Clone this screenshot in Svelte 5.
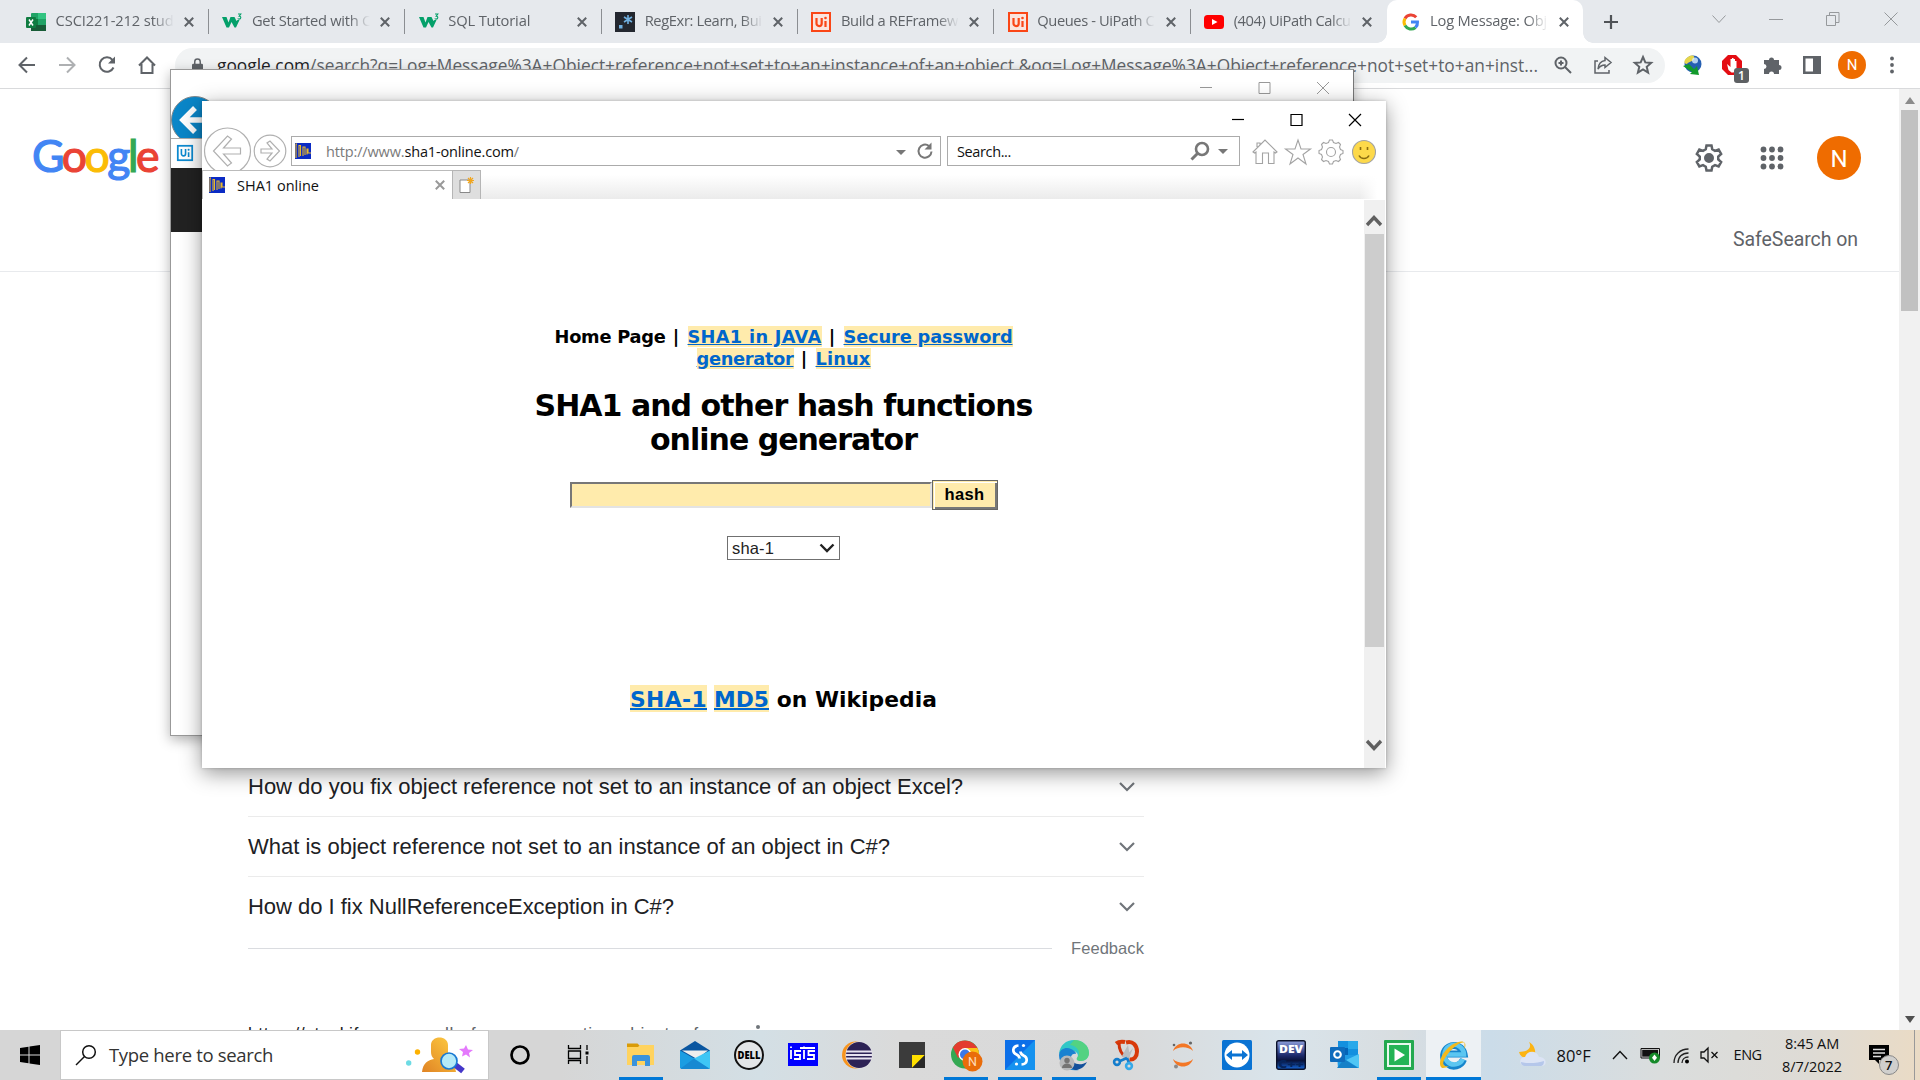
<script>
  // Spreads letter spacing so a label takes exactly the given width.
  function fit(node, width) {
    const n = node.textContent.length;
    const natural = node.getBoundingClientRect().width;
    node.style.letterSpacing = (width - natural) / n + 'px';
  }

  const w3 = '<path d="M0 5h4.500l2 5.500 2-5.500h4l2 4 1-1h2L14 15.500h-1.500L9.500 10 7 15.500H4.500z" fill="#04a06a"/><path d="M16 2h2.800l-1.600 2.100c2.300 0 2 3-.2 3-.6 0-1-.2-1.300-.6" fill="none" stroke="#04a06a" stroke-width="1.100"/>';
  const uip = '<rect x="1" y="1" width="18" height="18" fill="#fbe4dd" stroke="#fa4616" stroke-width="2"/><path d="M5.500 6v5.500a2.600 2.600 0 0 0 5.200 0V6M14.500 9v6" fill="none" stroke="#fa4616" stroke-width="2.200"/><circle cx="14.500" cy="6" r="1.300" fill="#fa4616"/>';
  const tabs = [
    { label: 'CSCI221-212 stud', w: 118, icon: '<rect x="5" y="1" width="15" height="18" rx="1" fill="#21a366"/><path d="M12 1h8v6h-8z" fill="#33c481"/><path d="M5 7h7v6H5z" fill="#107c41"/><path d="M5 13h15v6H5z" fill="#185c37"/><rect y="5" width="10" height="11" rx="1" fill="#107c41"/><path d="M3 7.500l4 6M7 7.500l-4 6" stroke="#fff" stroke-width="1.500"/>' },
    { label: 'Get Started with C', w: 119, icon: w3 },
    { label: 'SQL Tutorial', w: 82, icon: w3 },
    { label: 'RegExr: Learn, Bui', w: 117, icon: '<rect width="20" height="20" fill="#23272f"/><rect x="4" y="13" width="3.500" height="3.500" fill="#70b0e0"/><path d="M13 3v9M9 5l8 5M17 5l-8 5" stroke="#70b0e0" stroke-width="1.600"/>' },
    { label: 'Build a REFramew', w: 117, icon: uip },
    { label: 'Queues - UiPath C', w: 117, icon: uip },
    { label: '(404) UiPath Calcu', w: 117, icon: '<rect y="3" width="20" height="14" rx="3.500" fill="#f00"/><path d="M8 7l5.500 3L8 13z" fill="#fff"/>' },
    { label: 'Log Message: Obj', w: 117, active: true, icon: '<g fill="none" stroke-width="3"><path d="M15.200 5.200A7 7 0 0 0 4 6.500" stroke="#ea4335"/><path d="M4 6.500a7 7 0 0 0 0 7" stroke="#fbbc05"/><path d="M4 13.500a7 7 0 0 0 10.500 2" stroke="#34a853"/><path d="M14.500 15.500a7 7 0 0 0 2-5.500H10" stroke="#4285f4"/></g>' }
  ];

  const questions = [
    ['How do you fix object reference not set to an instance of an object Excel?', 715],
    ['What is object reference not set to an instance of an object in C#?', 642],
    ['How do I fix NullReferenceException in C#?', 426]
  ];

  // Taskbar icons are drawn on a 30 by 30 grid.
  const tasks = [
    { icon: '<circle cx="15" cy="15" r="8.500" fill="none" stroke="#000" stroke-width="2.700"/>' },
    { icon: '<path d="M4.500 5v3.500h12V5M4.500 24v-3.500h12V24M4.500 11h12v7.500h-12zM23 5v5M23 16v8" fill="none" stroke="#000" stroke-width="1.300"/><rect x="21.500" y="11.500" width="3" height="3"/>' },
    { run: true, icon: '<path d="M1 5V3.500h10.500L14 6v3H1z" fill="#d99b08"/><path d="M1 7h11l2-2h14v20H1z" fill="#ffd35f"/><path d="M6 26V17a2 2 0 0 1 2-2h14a2 2 0 0 1 2 2v9h-5v-5h-8v5z" fill="#3a93dd"/>' },
    { icon: '<path d="M0 10.500L15 1l15 9.500V28H0z" fill="#0a56a0"/><path d="M2 10.500h26L17 19z" fill="#eee"/><path d="M0 10.500L15 19l15 9H0z" fill="#1b9de2"/><path d="M30 10.500V29L13 19z" fill="#3fc6f5"/><path d="M0 29h30L14 18.500z" fill="#1789d2"/>' },
    { icon: '<circle cx="15" cy="15" r="14" fill="#e2e5e7" stroke="#111" stroke-width="2"/><text x="3.500" y="18.700" font-family="Open Sans, sans-serif" font-weight="800" font-size="10.500" textLength="23" lengthAdjust="spacingAndGlyphs">DELL</text>' },
    { icon: '<rect y="3" width="30" height="23" fill="#00f"/><path d="M3 10v9M3 6.500v1.500M13 11H7v4h5v4H6M16 10v9M16 6.500v1.500M27 11h-6.500v4H26v4h-7M12 8h15" fill="none" stroke="#fff" stroke-width="1.800"/>' },
    { icon: '<circle cx="13.500" cy="15" r="13.500" fill="#f7941e"/><circle cx="17" cy="15" r="13.500" fill="#e4e2e8"/><circle cx="17" cy="15" r="13" fill="#2c2255"/><path d="M4 11.500h26M4 15h26M4 18.500h26" stroke="#e7e3ef" stroke-width="2"/>' },
    { icon: '<path d="M2 2h26v26H2z" fill="#3b3b3b"/><path d="M15 15h13L15 28z" fill="#ffe000"/><path d="M28 15v13H15z" fill="#292929"/>' },
    { run: true, icon: '<circle cx="14" cy="14.500" r="14" fill="#34a853"/><path d="M14 .5a14 14 0 0 1 13.500 10.500H14L7 18 1.900 7.500A14 14 0 0 1 14 .5z" fill="#e33b2e"/><path d="M14 8h12.500a14 14 0 0 1-11 20.500L20 17z" fill="#fbc116"/><circle cx="14" cy="14.500" r="6.500" fill="#fff"/><circle cx="14" cy="14.500" r="5" fill="#3b78e7"/><circle cx="21.500" cy="21.500" r="10" fill="#e96c0a"/><text x="21.500" y="26" fill="#ffdcb9" text-anchor="middle" font-family="Roboto, sans-serif" font-size="12.500">N</text>' },
    { run: true, icon: '<rect width="30" height="30" fill="#0c6fe8"/><path d="M0 30L30 0v30z" fill="#1592ef"/><path d="M13.500 5.500C7 6 7 12.500 11.500 14.500c2 1 3 2 3 4M16.500 24.500C23 24 23 17.500 18.500 15.500c-2-1-3-2-3-4" fill="none" stroke="#fff" stroke-width="2.700"/><circle cx="18.500" cy="5.500" r="1.600" fill="#fff"/><circle cx="11.500" cy="24" r="1.600" fill="#fff"/>' },
    { run: true, icon: '<path d="M0 14C1 5 7 0 15 0c9 0 15 6 15 13 0 5-4 8-8 8-3 0-5-1-4-3 3-4-2-8-7-8-6 0-9 2-11 4z" fill="#31c7c6"/><path d="M15 0c9 0 15 6 15 13 0 5-4 8-8 8-3 0-5-1-4-3C23 12 18 6 11 5z" fill="#5fd66b" opacity=".75"/><path d="M0 15C1 8 8 7 12 9c3 1 5 3 5 5-4-1-6 3-5 7 1 5 5 8 8 9C9 32 0 25 0 15z" fill="#1a82d1"/><path d="M12 17c0 6 8 10 16 5-3 6-8 8-12 8-6-2-8-9-4-13z" fill="#12509b"/><circle cx="8" cy="23" r="7.500" fill="#b7b9bb"/><circle cx="8" cy="20.500" r="2.700" fill="#747474"/><path d="M3 28c0-6 10-6 10 0z" fill="#747474"/>' },
    { icon: '<path d="M3 3.500c2-1.500 6-2 9-1.500M13 2.500c7-2 11 3 11 9 0 5-3 8.500-7.500 8" fill="none" stroke="#d83a0a" stroke-width="4"/><path d="M6 3c0 6 2 11 7 14" fill="none" stroke="#cf3209" stroke-width="3"/><path d="M15 5l2 12-4 3-4-4zM20 8l-5 13-2-5z" fill="#b9bdc1"/><path d="M14 18l-7 3M14 18l2 5" stroke="#147dcc" stroke-width="2.600"/><circle cx="4" cy="22" r="2.900" fill="none" stroke="#147dcc" stroke-width="2.600"/><circle cx="16" cy="26" r="2.900" fill="none" stroke="#35a9e9" stroke-width="2.600"/>' },
    { icon: '<path d="M5 11c3-10 17-10 20 0-5-5-15-5-20 0zM5 19c3 10 17 10 20 0-5 5-15 5-20 0z" fill="#f37726"/><circle cx="6" cy="5" r="1.300" fill="#666"/><circle cx="22.500" cy="3" r="1.600" fill="#666"/><circle cx="8" cy="26.500" r="2" fill="#8a8a8a"/>' },
    { icon: '<rect width="30" height="30" rx="1.500" fill="#0a73d3"/><circle cx="15" cy="15" r="12.500" fill="#fff"/><path d="M4 15l6-5v3.500h10V10l6 5-6 5v-3.500H10V20z" fill="#0a73d3"/>' },
    { icon: '<defs><linearGradient id="dev" x1="0" y1="0" x2="0" y2="1"><stop offset="0" stop-color="#8fa0dc"/><stop offset=".5" stop-color="#202d70"/><stop offset=".7" stop-color="#09123a"/><stop offset="1" stop-color="#1767d8"/></linearGradient></defs><rect x=".7" y=".7" width="28.600" height="28.600" rx="2" fill="url(#dev)" stroke="#0a1029" stroke-width="1.400"/><text x="3" y="13" fill="#fff" font-family="Open Sans, sans-serif" font-weight="800" font-size="10.200" textLength="24" lengthAdjust="spacingAndGlyphs">DEV</text><text x="2" y="27.500" fill="#06245c" font-family="Open Sans, sans-serif" font-weight="800" font-size="10.200" textLength="26" lengthAdjust="spacingAndGlyphs">C++</text>' },
    { icon: '<path d="M8 1h20v14H8z" fill="#1490df"/><path d="M18 1h10v8H18z" fill="#28a8ea"/><path d="M8 8h10v8H8z" fill="#0364b8"/><path d="M7 15h22v13H8z" fill="#1e9be5"/><path d="M29 14v14L16 20z" fill="#50c6f5"/><path d="M7 28h21L14 19z" fill="#1580c8"/><rect y="7" width="15" height="15" rx="1" fill="#0f6cbd"/><circle cx="7.500" cy="14.500" r="3.300" fill="none" stroke="#fff" stroke-width="2.100"/>' },
    { run: true, icon: '<rect width="30" height="30" rx="1" fill="#23a94f"/><rect x="4" y="4" width="22" height="22" fill="#23b455" stroke="#e8f8ed" stroke-width="2"/><path d="M10.500 8.500L21 15l-10.500 6.500z" fill="#fff"/>' },
    { run: true, on: true, icon: '<path d="M24.500 19.500A10.300 10.300 0 1 1 25 14H7" fill="none" stroke="#1685cc" stroke-width="7"/><path d="M24 19A9.800 9.800 0 1 1 25 14.500H8" fill="none" stroke="#5bc6f1" stroke-width="4.500"/><path d="M25.500 9C30-2 17 0 8 9-1 18 0 28 4 28c2 0 4-1 6-2-5 1-7-1-5-6C9 11 22 0 25.500 3z" fill="#f3b91b"/>' }
  ];
</script>

{#snippet controls()}
  <div class="controls">
    <svg width="14" height="14"><path d="M1 6.500h12" /></svg>
    <svg width="14" height="14"><path d="M1 1.500h11v11H1z" /></svg>
    <svg width="14" height="14"><path d="M1 1l12 12M13 1L1 13" /></svg>
  </div>
{/snippet}

{#snippet wave()}
  <svg class="wave" viewBox="0 0 16 16"><rect width="16" height="16" fill="#0b2bc4" /><path d="M1 15V1h1M4 14V2.500h1.500V13M8 13V4h2v8M12 11.500V6h1v4h3" fill="none" stroke="#e8b82c" stroke-width="1.100" /></svg>
{/snippet}

<div class="screen">
  <div class="browser">
    <div class="tabstrip">
      {#each tabs as t}
        <div class="tab" class:active={t.active}>
          <svg class="fav" viewBox="0 0 20 20">{@html t.icon}</svg>
          <span class="tabtext"><span class="lbl" use:fit={t.w}>{t.label}</span></span>
          <svg class="x" viewBox="0 0 10 10"><path d="M.8.8l8.400 8.400M9.200.8L.8 9.200" /></svg>
        </div>
      {/each}
      <svg class="plus" viewBox="0 0 16 16"><path d="M8 1v14M1 8h14" /></svg>
      <div class="chromectl">
        <svg width="14" height="14"><path d="M.5 3.500L7 10.500l6.500-7" /></svg>
        <svg width="14" height="14"><path d="M0 7.500h14" /></svg>
        <svg width="14" height="14"><path d="M.5 3.500h9v10h-9zM3.500 3.500v-3h9.500v10H9.500" /></svg>
        <svg width="14" height="14"><path d="M.5.5l13 13M13.500.5l-13 13" /></svg>
      </div>
    </div>

    <div class="toolbar">
      <div class="navs">
        <span><svg viewBox="0 0 20 20"><path d="M18 10H3M10 2.500L2.500 10l7.500 7.500" /></svg></span>
        <span class="dim"><svg viewBox="0 0 20 20"><path d="M2 10h15M10 2.500l7.500 7.500-7.500 7.500" /></svg></span>
        <span><svg viewBox="0 0 20 20"><path d="M16.500 12.500a7.200 7.200 0 1 1-1-7.500" /><path d="M18 1.500v7h-7z" fill="#5f6368" stroke="none" /></svg></span>
        <span><svg viewBox="0 0 20 20"><path d="M2 10.500L10 2.500l8 8M4.500 9v9h11V9" /></svg></span>
      </div>
      <div class="omni">
        <svg class="lock" viewBox="0 0 12 16"><rect y="6" width="12" height="10" rx="1.500" /><path d="M3 7V4a3 3 0 0 1 6 0v3" /></svg>
        <span class="url" use:fit={1321}><b>google.com</b>/search?q=Log+Message%3A+Object+reference+not+set+to+an+instance+of+an+object.&amp;oq=Log+Message%3A+Object+reference+not+set+to+an+inst...</span>
        <div class="omniicons">
          <span><svg viewBox="0 0 20 20"><circle cx="8" cy="8" r="5.500" /><path d="M12 12l6 6M5.500 8h5M8 5.500v5" /></svg></span>
          <span><svg viewBox="0 0 20 20" class="thin"><path d="M5 6H2v12h14v-3M12 2.500l6 5-6 5V10c-3 0-5 1-7 4 .5-5 3-8 7-8.500z" /></svg></span>
          <span><svg viewBox="0 0 20 20"><path d="M10 2l2.300 5.400 5.900.5-4.500 3.900 1.400 5.800-5.100-3.100-5.100 3.100 1.400-5.800L1.800 7.900l5.900-.5z" /></svg></span>
        </div>
      </div>
      <div class="exts">
        <span><svg class="plain" viewBox="0 0 20 20"><circle cx="11" cy="9" r="8.500" fill="#255fb2" /><path d="M6 2c5-3 7-1 6 2s-5 2-7 5C1 9 2 4 6 2z" fill="#e6d64b" /><circle cx="13" cy="5.500" r="3" fill="#d8edff" opacity=".8" /><path d="M1 11l6-2 5 5 3-3 2 9-9-1 2-2z" fill="#129a2c" /></svg></span>
        <span><svg class="plain" viewBox="0 0 20 20"><path d="M6 0h8l6 6v8l-6 6H6l-6-6V6z" fill="#e40d13" /><path d="M5 9l1.500 6 3 2.500h2l3-3V6h-1.500v4V4H11.500v5V3H10v6V4H8.500v8z" fill="#fff" /></svg><i class="count">1</i></span>
        <span><svg class="plain" viewBox="0 0 20 20"><path d="M2 5h5a2.500 2.500 0 1 1 5 0h5v5a2.500 2.500 0 1 1 0 5v4h-5a2.500 2.500 0 0 0-5 0H2v-5a2.500 2.500 0 0 0 0-5z" fill="#5f6368" /></svg></span>
        <span><svg class="plain" viewBox="0 0 20 20"><path d="M1 1h18v18H1z" fill="#5f6368" /><path d="M3.500 3.500H11v13H3.500z" fill="#fff" /></svg></span>
        <span><i class="me">N</i></span>
        <span><svg class="plain" viewBox="0 0 20 20"><g fill="#5f6368"><circle cx="10" cy="3.500" r="1.900" /><circle cx="10" cy="10" r="1.900" /><circle cx="10" cy="16.500" r="1.900" /></g></svg></span>
      </div>
    </div>

    <div class="viewport">
      <div class="page">
        <header>
          <div class="logo" use:fit={125}><b class="bl">G</b><b class="rd">o</b><b class="yl">o</b><b class="bl">g</b><b class="gr">l</b><b class="rd">e</b></div>
          <div class="account">
            <div class="apps">
              <svg width="30" height="30" viewBox="0 0 24 24" fill="none" stroke="#5f6368" stroke-width="2"><path d="M10 2h4l.6 3 2.200 1.300L19.700 5.300l2 3.500-2.300 2v2.400l2.300 2-2 3.500-2.900-1-2.200 1.300-.6 3h-4l-.6-3-2.200-1.300-2.900 1-2-3.500 2.300-2v-2.400l-2.300-2 2-3.500 2.900 1L9.400 5z" /><circle cx="12" cy="12" r="3" fill="#5f6368" /></svg>
              <svg width="24" height="24" viewBox="0 0 24 24" fill="#5f6368">
                {#each [3.5, 12, 20.5] as cy}{#each [3.5, 12, 20.5] as cx}<circle {cx} {cy} r="2.900" />{/each}{/each}
              </svg>
              <i class="bigme">N</i>
            </div>
            <span class="safe" use:fit={125}>SafeSearch on</span>
          </div>
        </header>
        <main>
          {#each questions as [q, w]}
            <div class="q"><span use:fit={w}>{q}</span><svg width="18" height="12" viewBox="0 0 18 12"><path d="M2 2l7 7 7-7" /></svg></div>
          {/each}
          <div class="fb"><i></i><span use:fit={73}>Feedback</span></div>
          <div class="result"><span use:fit={494}><b>https://stackify.com</b> › nullreferenceexception-object-refere...</span><em></em></div>
        </main>
      </div>
      <div class="scroll">
        <svg width="10" height="7"><path d="M5 0l5 7H0z" fill="#8b8b8b" /></svg>
        <div class="thumb"></div>
        <svg width="10" height="7"><path d="M0 0h10L5 7z" fill="#505050" /></svg>
      </div>
    </div>
  </div>

  <div class="win back">
    {@render controls()}
    <div class="bluenav"><svg width="48" height="48" viewBox="0 0 48 48"><circle cx="24" cy="24" r="23.500" fill="#0a86c8" stroke="#80888c" /><path d="M38 24H14M24 12L12 24l12 12" fill="none" stroke="#fff" stroke-width="5.500" /></svg></div>
    <div class="uitab"><svg width="16" height="16" viewBox="0 0 20 20"><rect x="1" y="1" width="18" height="18" fill="#fff" stroke="#0c8ad0" stroke-width="2.200" /><path d="M5.500 5v6a2.600 2.600 0 0 0 5.200 0V5M14.500 9v6" fill="none" stroke="#0c8ad0" stroke-width="2" /><circle cx="14.500" cy="6" r="1.300" fill="#0c8ad0" /></svg></div>
    <div class="band"></div>
  </div>

  <div class="win front">
    {@render controls()}
    <div class="iebar">
      <svg width="48" height="43" viewBox="0 0 48 43"><g fill="none" stroke="#b0b0b0" stroke-width="1.200"><circle cx="24.500" cy="24" r="23" /><path d="M37.500 21v6h-17l8 9-4 3-14-15 14-15 4 3-8 9z" /></g></svg>
      <svg width="34" height="34" viewBox="0 0 34 34"><g fill="none" stroke="#b0b0b0" stroke-width="1.200"><circle cx="17" cy="17" r="15.800" /><path d="M8 15v4h11l-5 6 3 2 9.500-10L17 7l-3 2 5 6z" /></g></svg>
      <div class="addr">
        {@render wave()}
        <span class="ieurl" use:fit={193}>http://www.<b>sha1-online.com</b>/</span>
        <svg class="caret" width="10" height="5"><path d="M0 0h10L5 5z" fill="#777" /></svg>
        <svg width="18" height="18" viewBox="0 0 18 18"><path d="M15.500 9.500A6.500 6.500 0 1 1 13 4" fill="none" stroke="#777" stroke-width="2" /><path d="M15.500.5v7h-7z" fill="#777" /></svg>
      </div>
      <div class="search">
        <span use:fit={54}>Search...</span>
        <svg width="20" height="20" viewBox="0 0 20 20"><circle cx="12" cy="8" r="6" fill="none" stroke="#777" stroke-width="2.600" /><path d="M8 12l-6.500 6.500" stroke="#777" stroke-width="3" /></svg>
        <svg width="10" height="5"><path d="M0 0h10L5 5z" fill="#777" /></svg>
      </div>
      <div class="ieicons">
        <svg viewBox="0 0 26 26"><path d="M1 13L13 1l12 12-1.500 1-1.500-1v11.500h-5.500V14h-6v10.500H4V13l-1.500 1zM5 8V4h3v1.500" /></svg>
        <svg viewBox="0 0 26 26"><path d="M13 1l3 9h9.500L18 15.500 21 25l-8-6-8 6 3-9.500L.5 10H10z" /></svg>
        <svg viewBox="0 0 26 26"><path d="M10.500 3.500l1-2.500h3l1 2.500 2.500 1 2.500-1 2 2-1 2.500 1 2.500 2.500 1v3l-2.500 1-1 2.500 1 2.500-2 2-2.500-1-2.500 1-1 2.500h-3l-1-2.500-2.500-1-2.500 1-2-2 1-2.500-1-2.500-2.500-1v-3l2.500-1 1-2.500-1-2.500 2-2 2.500 1z" /><circle cx="13" cy="13" r="4.500" /></svg>
        <svg viewBox="0 0 26 26"><circle class="face" cx="13" cy="13" r="11.500" /><path class="smile" d="M9.500 8v3M16.500 8v3M8 16.500c2 4 8 4 10 0" /></svg>
      </div>
    </div>
    <div class="ietabs">
      <div class="ietab">{@render wave()}<span use:fit={82}>SHA1 online</span><svg class="x" viewBox="0 0 10 10"><path d="M.8.8l8.400 8.400M9.200.8L.8 9.200" /></svg></div>
      <div class="newtab"><svg width="15" height="17" viewBox="0 0 15 17"><path d="M1 3h10v12.500H1z" fill="#fff" stroke="#888" /><path d="M11.500 0v7M8 3.500h7M9 1l5 5M14 1L9 6" stroke="#f0a51e" stroke-width="1.200" /></svg></div>
      <div class="shade"></div>
    </div>
    <div class="iebody">
      <div class="doc">
        <p class="nav"><span use:fit={111}>Home Page</span><span use:fit={22}>{' | '}</span><a use:fit={134}>SHA1 in JAVA</a><span use:fit={22}>{' | '}</span><a use:fit={169}>Secure password</a><br /><a use:fit={97}>generator</a><span use:fit={22}>{' | '}</span><a use:fit={55}>Linux</a></p>
        <h1><span use:fit={498}>SHA1 and other hash functions</span><br /><span use:fit={267}>online generator</span></h1>
        <div class="form"><div class="field"></div><div class="btn"><span use:fit={40}>hash</span></div></div>
        <div class="select"><span use:fit={42}>sha-1</span><svg width="16" height="10" viewBox="0 0 16 10"><path d="M1.500 1.500L8 8l6.500-6.500" /></svg></div>
        <p class="wiki"><a use:fit={77}>SHA-1</a><span use:fit={7}>{' '}</span><a use:fit={55}>MD5</a><span use:fit={168}>{' on Wikipedia'}</span></p>
      </div>
      <div class="iescroll">
        <svg width="18" height="12" viewBox="0 0 18 12"><path d="M2 10l7-7.500 7 7.500" /></svg>
        <div class="iethumb"></div>
        <svg width="18" height="12" viewBox="0 0 18 12"><path d="M2 2l7 7.500L16 2" /></svg>
      </div>
    </div>
  </div>

  <div class="taskbar">
    <div class="start"><svg width="20" height="20" viewBox="0 0 20 20"><path d="M0 3l8.500-1.200v7.700H0zM9.500 1.600L20 0v9.500H9.500zM0 10.500h8.500v7.700L0 17zM9.500 10.500H20V20L9.500 18.400z" /></svg></div>
    <div class="find">
      <svg width="22" height="22" viewBox="0 0 22 22"><circle cx="14" cy="8" r="6.300" fill="none" stroke="#111" stroke-width="1.500" /><path d="M9.500 12.500L1 21" stroke="#111" stroke-width="1.500" /></svg>
      <span use:fit={164}>Type here to search</span>
      <svg class="art" width="68" height="36" viewBox="0 0 68 36"><defs><linearGradient id="au" x1="0" x2="1" y1="1" y2="0"><stop offset="0" stop-color="#e08324" /><stop offset="1" stop-color="#ffce42" /></linearGradient></defs><circle cx="11.500" cy="15" r="2.700" fill="#fdb100" /><circle cx="2.700" cy="26" r="2.700" fill="#6ddbe4" /><path d="M25 8c0-10 17-10 17 0v7c0 3-1 5-3 7 7 1 10 6 11 13H16c1-9 6-12 12-13-2-2-3-4-3-7z" fill="url(#au)" /><path d="M48 27l9 7" stroke="#4537c9" stroke-width="6" /><circle cx="43" cy="24" r="8" fill="#b5eaf8" stroke="#1979d2" stroke-width="1.700" /><path d="M60 8l2 4.500 5 .5-4 3 1 4.500-4-3-4 2 1-4.500-4-3 5-.5z" fill="#e479fc" /></svg>
    </div>
    <div class="tasks">
      {#each tasks as t}
        <div class="task" class:run={t.run} class:on={t.on}><svg viewBox="0 0 30 30">{@html t.icon}</svg></div>
      {/each}
    </div>
    <div class="tray">
      <svg width="28" height="26" viewBox="0 0 28 26"><path d="M11 0c3 5 0 10-10 10 1 4 4 6 8 6l8-4c1-5-2-10-6-12z" fill="#fcb414" /><path d="M8 24c-8 0-7-9-1-9 2-7 12-7 14 0 8 0 9 9 2 9z" fill="#dce4f5" /><path d="M8 24c-4 0-5-2-5-4 6 2 18 1 23-1 0 3-1 5-4 5z" fill="#b5c7ea" /></svg>
      <span class="temp" use:fit={34}>80°F</span>
      <svg class="up" width="16" height="10" viewBox="0 0 16 10"><path d="M1 9l7-7.500L15 9" fill="none" stroke="#111" stroke-width="1.400" /></svg>
      <svg class="bat" width="20" height="18" viewBox="0 0 20 18"><path d="M.7 3.200h17v8h-17z" fill="#111" stroke="#eee" stroke-width="1" /><path d="M0 2.500h18.500V12H0z" fill="none" stroke="#111" /><circle cx="13.500" cy="12" r="5.500" fill="#168a2a" /><path d="M13.500 8.500l2.500 3.300-2.500 3.300-2.500-3.300z" fill="#fff" /></svg>
      <svg class="wifi" width="17" height="17" viewBox="0 0 17 17"><g fill="none" stroke="#222" stroke-width="1.300"><path d="M1 16C1 8 7 2 15.500 2M5 16c0-6 4-10 10.500-10M9 16c0-3.500 2.500-6 6.500-6" /></g><circle cx="14" cy="14.500" r="2" /></svg>
      <svg class="snd" width="20" height="16" viewBox="0 0 20 16"><path d="M1 5h3l4-4v14l-4-4H1zM11.500 5l6 6M17.500 5l-6 6" fill="none" stroke="#111" stroke-width="1.300" /></svg>
      <span class="eng" use:fit={28}>ENG</span>
      <div class="clock"><span use:fit={54}>8:45 AM</span><span use:fit={60}>8/7/2022</span></div>
      <div class="note"><svg width="20" height="20" viewBox="0 0 20 20"><path d="M0 0h20v15H10v4l-4-4H0z" /><path d="M4 4.500h12M4 8h12M4 11.500h8" stroke="#ddd" stroke-width="1.300" /></svg><i>7</i></div>
      <div class="peek"></div>
    </div>
  </div>
</div>

<style>
  :global(body) { background: #fff; overflow: hidden; }
  .screen { position: relative; width: 1920px; height: 1080px; overflow: hidden; font-family: "Open Sans", "Noto Sans", sans-serif; color: #111; }
  .screen *, .screen { box-sizing: border-box; }
  svg { display: block; flex: none; overflow: visible; }
  b, i, em { font-weight: inherit; font-style: normal; }
  span { white-space: pre; }
  .browser { height: 1030px; display: flex; flex-direction: column; overflow: hidden; }

  .tabstrip { height: 43px; flex: none; background: #e6e9ed; display: flex; padding-left: 12.600px; align-items: center; }
  .tab { position: relative; width: 196.350px; flex: none; height: 43px; display: flex; align-items: center; padding-left: 13.500px; color: #5f6368; font-size: 14.700px; }
  .tab:not(.active)::after { content: ""; position: absolute; right: 0; top: 9px; width: 1px; height: 25px; background: #8b8e92; }
  .tab:nth-child(7)::after { display: none; }
  .tab.active { background: #fff; border-radius: 10px 10px 0 0; }
  .tab.active::before, .tab.active::after { content: ""; position: absolute; bottom: 0; width: 10px; height: 10px; top: auto; background: radial-gradient(circle at 0 0, transparent 9.500px, #fff 10px); left: -10px; }
  .tab.active::after { left: auto; right: -10px; background: radial-gradient(circle at 100% 0, transparent 9.500px, #fff 10px); }
  .fav { width: 20px; height: 20px; }
  .tabtext { width: 118px; margin: -3px 10.500px 0 9.500px; overflow: hidden; line-height: 24px; -webkit-mask-image: linear-gradient(90deg, #000 82%, transparent); mask-image: linear-gradient(90deg, #000 82%, transparent); }
  .lbl { display: inline-block; }
  .x { width: 10px; height: 10px; }
  .x path { stroke: #5f6368; stroke-width: 2; fill: none; }
  .plus { width: 16px; height: 16px; margin-left: 19.500px; }
  .plus path { stroke: #505357; stroke-width: 2.200; }
  .chromectl { display: flex; gap: 43.300px; margin: -6px 0 0 93px; }
  .chromectl path { fill: none; stroke: #96999c; }

  .toolbar { height: 46px; flex: none; border-bottom: 1px solid #d9dadc; display: flex; align-items: center; padding: 0 0 1px 7px; }
  .navs, .exts, .omniicons { display: flex; flex: none; }
  .navs > span, .exts > span, .omniicons > span { width: 40px; height: 35px; display: flex; align-items: center; justify-content: center; position: relative; }
  .toolbar span > svg { width: 20px; height: 20px; fill: none; stroke: #5f6368; stroke-width: 2; }
  .toolbar span > svg.plain { stroke: none; }
  .toolbar span > svg.thin { stroke-width: 1.500; }
  .toolbar .dim { opacity: .5; }
  .omni { width: 1490px; height: 35px; margin: 0 7px 0 8px; border-radius: 18px; background: #f1f3f4; display: flex; align-items: center; padding: 0 3px 0 17px; color: #5f6368; flex: none; }
  .lock { width: 11px; height: 15px; fill: #5f6368; margin: 0 14px 0 0; }
  .lock path { fill: none; stroke: #5f6368; stroke-width: 1.600; }
  .url { font-size: 17.300px; line-height: 24px; margin-right: 5px; padding-top: 2px; }
  .url b { color: #202124; }
  .omniicons { margin-left: auto; }
  .count { position: absolute; left: 22px; top: 20px; width: 15px; height: 15px; border-radius: 3px; background: #5d6063; color: #fff; font: 600 12px/15px "Open Sans", sans-serif; text-align: center; }
  .me, .bigme { background: #ef6c00; color: #fff; border-radius: 50%; text-align: center; width: 28px; height: 28px; font: 15px/28px Roboto, sans-serif; }
  .viewport { flex: 1; display: flex; min-height: 0; }
  .page { flex: 1; }
  header { height: 183px; border-bottom: 1px solid #e8eaed; display: flex; justify-content: space-between; padding: 0 41px 0 32px; }
  .logo { font: 44.500px/50px Lato, sans-serif; margin-top: 41px; align-self: flex-start; -webkit-text-stroke: 1.200px currentColor; white-space: nowrap; }
  .bl { color: #4285f4; -webkit-text-stroke-color: #4285f4; } .rd { color: #ea4335; -webkit-text-stroke-color: #ea4335; } .yl { color: #fbbc05; -webkit-text-stroke-color: #fbbc05; } .gr { color: #34a853; -webkit-text-stroke-color: #34a853; }
  .account { display: flex; flex-direction: column; align-items: flex-end; padding-top: 47px; }
  .apps { display: flex; align-items: center; height: 44px; margin-right: -3px; }
  .apps svg + svg { margin: 0 33px 0 36px; }
  .bigme { width: 44px; height: 44px; font: 24px/47px Roboto, sans-serif; }
  .safe { font: 19.500px/28px Roboto, sans-serif; color: #5f6368; margin-top: 46px; }
  main { width: 896px; margin-left: 248px; padding-top: 485px; }
  .q { height: 60px; border-bottom: 1px solid #ebebeb; display: flex; align-items: center; justify-content: space-between; padding: 0 8px 0 0; font: 22px/28px "Liberation Sans", Arial, sans-serif; color: #202124; }
  .q:nth-child(3) { border-color: transparent; }
  .q svg path { fill: none; stroke: #70757a; stroke-width: 2.200; }
  .fb { display: flex; align-items: center; justify-content: space-between; height: 22px; font: 16.500px/22px "Liberation Sans", Arial, sans-serif; color: #70757a; }
  .fb i { width: 804px; height: 1px; background: #dadce0; }
  .result { display: flex; margin-top: 64px; font: 17.500px/22px "Liberation Sans", Arial, sans-serif; color: #5f6368; }
  .result b { color: #202124; }
  .result em { width: 4px; height: 4px; border-radius: 50%; background: #70757a; margin: 2px 0 0 14px; }
  .scroll { width: 21px; background: #f1f1f1; display: flex; flex-direction: column; align-items: center; padding: 8px 0 7px; }
  .thumb { width: 17px; height: 201px; background: #c1c1c1; margin: 6px 0 auto; }

  .win { position: absolute; background: #fff; display: flex; flex-direction: column; overflow: visible; }
  .back { left: 170px; top: 69px; width: 1184px; height: 667px; border: 1px solid #999; border-right-color: #777; box-shadow: 0 4px 12px rgba(0, 0, 0, .3); }
  .front { left: 202px; top: 101px; width: 1184px; height: 667px; box-shadow: 0 5px 20px rgba(0, 0, 0, .42), 0 0 3px rgba(0, 0, 0, .2); }
  .controls { display: flex; justify-content: flex-end; gap: 44.500px; padding: 12px 24px 0 0; height: 35px; flex: none; }
  .controls path { fill: none; stroke: #000; stroke-width: 1.200; }
  .back .controls { height: 26px; padding: 11px 23px 0 0; }
  .back .controls path { stroke: #999; stroke-width: 1; }
  .bluenav { height: 43px; overflow: hidden; border-bottom: 1px solid #aaa; flex: none; }
  .uitab { height: 29px; padding: 6px 0 0 6px; flex: none; }
  .band { height: 64px; background: #222; flex: none; }

  .iebar { display: flex; height: 34px; align-items: flex-start; padding-left: 1px; flex: none; }
  .iebar > svg { margin-top: -9px; }
  .iebar > svg + svg { margin: -2px 0 0 2px; }
  .addr, .search { height: 30px; border: 1px solid #ababab; display: flex; align-items: center; font-size: 14.500px; line-height: 22px; flex: none; }
  .addr { width: 650px; margin-left: 4px; padding: 0 6px 0 3px; color: #7a7a7a; }
  .addr b { color: #111; }
  .wave { width: 16px; height: 16px; }
  .ieurl { margin-left: 15px; padding-top: 1px; }
  .caret { margin: 2px 10px 0 auto; }
  .search { width: 293px; margin-left: 6px; padding: 0 11px 0 9px; }
  .search > span { padding-top: 1px; }
  .search svg { margin-left: 8px; }
  .search span + svg { margin-left: auto; }
  .ieicons { display: flex; gap: 7px; margin: 3px 0 0 12px; }
  .ieicons svg { width: 26px; height: 26px; fill: none; stroke: #a3a3a3; stroke-width: 1.100; }
  .ieicons .face { fill: #fdd94a; }
  .ieicons .smile { stroke: #8a6c10; stroke-width: 1.600; }
  .ietabs { height: 29px; display: flex; flex: none; position: relative; }
  .ietab { width: 250px; border-left: 1px solid #bbb; border-top: 1px solid #bbb; background: #fff; display: flex; align-items: center; padding: 0 7px 0 6px; font-size: 14.500px; }
  .ietab span { margin: 0 auto 0 12px; }
  .ietab .x path { stroke: #999; }
  .newtab { width: 29px; border: 1px solid #b5b5b5; border-bottom: 0; background: #dedede; display: flex; align-items: center; justify-content: center; }
  .shade { flex: 1; margin: 5px 9px 0 0; background: linear-gradient(90deg, transparent 98%, #fff), linear-gradient(#fff, #ebebeb); }
  .iebody { flex: 1; display: flex; min-height: 0; }
  .doc { flex: 1; display: flex; flex-direction: column; align-items: center; text-align: center; font-family: "DejaVu Sans", Verdana, sans-serif; font-weight: 700; color: #000; padding: 127px 0 0 1px; }
  .doc a { color: #06c; background: #ffebac; text-decoration: underline; white-space: pre; }
  p, h1 { margin: 0; }
  .nav { font-size: 17.800px; line-height: 21.500px; }
  h1 { font-size: 30px; line-height: 34px; margin-top: 20px; }
  .form { display: flex; align-items: center; margin-top: 23px; height: 30px; }
  .field { width: 362px; height: 26px; background: #ffebac; border: 2px solid; border-color: #777 #e3e3e3 #e3e3e3 #777; }
  .btn { width: 66px; height: 30px; border: 1px solid #666; box-shadow: inset 1px 1px #ffebac, inset 2px 2px #fff, inset -2px -2px #777; background: #ffebac; font: 700 16.500px/27px "Liberation Sans", Arial, sans-serif; }
  .select { width: 113px; height: 24px; margin-top: 26px; border: 1px solid #707070; display: flex; align-items: center; justify-content: space-between; padding: 0 4px; font: 400 16.500px/22px "Liberation Sans", Arial, sans-serif; color: #222; }
  .select path { fill: none; stroke: #222; stroke-width: 2.400; }
  .wiki { font-size: 21.800px; line-height: 26px; margin-top: 127px; }
  .wiki a { text-decoration-thickness: 2px; padding-top: 2px; }
  .iescroll { width: 22px; background: #f0f0f0; margin-top: 1px; border-right: 1px solid #fff; display: flex; flex-direction: column; align-items: center; padding: 15px 1px 17px 0; }
  .iescroll path { fill: none; stroke: #606060; stroke-width: 3.300; }
  .iethumb { width: 19px; height: 413px; background: #cdcdcd; margin: 7px 0 auto; }

  .taskbar { position: absolute; left: 0; top: 1030px; width: 1920px; height: 50px; display: flex; background: linear-gradient(90deg, #d6d6d6 0, #d6d6d6 560px, #d3dfe5 760px, #dadada 900px, #d9d9d9 1120px, #d9e4eb 1280px, #d8dde0 1400px, #cbdce9 1490px, #dadddd 1660px, #dedbd5 1810px, #eadbc5 1920px); }
  .start { width: 60px; flex: none; display: flex; align-items: center; justify-content: center; }
  .find { width: 429px; flex: none; background: #fff; border: 1px solid #c8c8c8; display: flex; align-items: center; padding: 0 14px; color: #333; font-size: 18.500px; }
  .find span { margin: -2px 0 0 12px; }
  .art { margin-left: auto; }
  .tasks { display: flex; margin-left: 4px; flex: none; }
  .task { position: relative; width: 54.200px; flex: none; display: flex; align-items: center; justify-content: center; }
  .task:nth-child(1) { width: 54px; }
  .task:nth-child(2) { width: 64px; margin-right: 2.600px; }
  .task svg { width: 30px; height: 30px; }
  .task.run::after { content: ""; position: absolute; left: 5px; right: 5px; bottom: 0; height: 3px; background: #0078d7; }
  .task.on { background: #edf1f4; }
  .task.on::after { left: 0; right: 0; }
  .tray { display: flex; align-items: center; margin-left: 37px; flex: none; }
  .tray > svg, .tray > span { flex: none; }
  .temp { font-size: 16.500px; margin-left: 11px; }
  .up { margin-left: 21px; }
  .bat { margin-left: 13px; }
  .wifi { margin-left: 12px; }
  .snd { margin-left: 10px; }
  .eng { font-size: 14.500px; margin: -1px 0 0 14px; }
  .clock { width: 61px; flex: none; margin-left: 20px; display: flex; flex-direction: column; align-items: center; font-size: 14.500px; line-height: 23px; }
  .note { position: relative; margin-left: 26px; }
  .note i { position: absolute; left: 10px; top: 10px; width: 20px; height: 20px; border-radius: 50%; background: #d0cfcd; border: 1px solid #888; font-size: 13px; line-height: 18px; text-align: center; font-weight: 600; }
  .peek { width: 1px; height: 50px; background: #999; margin-left: 25px; }
</style>
